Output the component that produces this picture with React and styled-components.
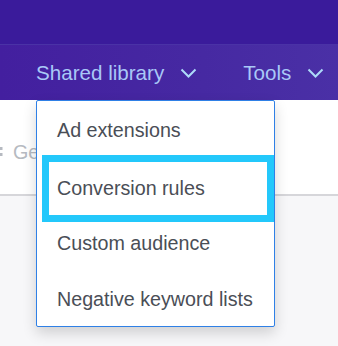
import React from "react";
import styled, { createGlobalStyle } from "styled-components";

const GlobalStyle = createGlobalStyle`
  html, body {
    margin: 0;
    padding: 0;
    background: #f7f7f9;
    font-family: "Liberation Sans", Arial, sans-serif;
    -webkit-font-smoothing: antialiased;
  }
`;

const Page = styled.div`
  position: relative;
  width: 338px;
  height: 346px;
  overflow: hidden;
  background: #f7f7f9;
`;

const TopBar = styled.div`
  height: 44px;
  background: #3a1b9b;
`;

const NavBar = styled.nav`
  display: flex;
  align-items: center;
  height: 55px;
  padding-left: 36px;
  border-top: 1px solid #4a32a6;
  background: linear-gradient(90deg, #431f9f 0%, #4629a2 60%, #4a30a6 100%);
`;

const NavItem = styled.div`
  display: flex;
  align-items: center;
  gap: 16px;
  margin-right: 46px;
  color: #a9c8f7;
  font-size: 20.6px;
  line-height: 24px;
  white-space: nowrap;
`;

const Chevron = () => (
  <svg width="17" height="10" viewBox="0 0 17 10" fill="none">
    <path d="M1.5 1.5 L8.5 8.5 L15.5 1.5" stroke="#addaf9" strokeWidth="2" />
  </svg>
);

const Toolbar = styled.div`
  display: flex;
  align-items: center;
  gap: 10px;
  height: 84px;
  padding-top: 10px;
  background: #fff;
  border-bottom: 2px solid #d6d6da;
  color: #b6bac1;
  font-size: 19.7px;
`;

const Handle = () => (
  <svg width="3" height="12" viewBox="0 0 3 12">
    <rect x="0" y="1" width="2.5" height="3" fill="#b6bac1" />
    <rect x="0" y="7" width="2.5" height="3" fill="#b6bac1" />
  </svg>
);

const Menu = styled.ul`
  position: absolute;
  top: 100px;
  left: 36px;
  width: 237px;
  margin: 0;
  padding: 0;
  list-style: none;
  background: #fff;
  border: 1px solid #2f80e6;
  border-radius: 2px;
  box-shadow: 0 6px 14px rgba(0, 0, 0, 0.16);
`;

const Item = styled.li`
  padding: ${(p) => p.$top}px 20px ${(p) => p.$bottom}px;
  color: #4a4e56;
  font-size: 19.7px;
  line-height: 23px;
  white-space: nowrap;
`;

const ActiveItem = styled.li`
  display: flex;
  align-items: center;
  height: 53px;
  margin-left: 5px;
  padding: 0 8px;
  border: 7px solid #23c8fb;
  color: #4a4e56;
  font-size: 19.7px;
  line-height: 23px;
  white-space: nowrap;
`;

export default function App() {
  return (
    <Page>
      <GlobalStyle />
      <TopBar />
      <NavBar>
        <NavItem>
          Shared library <Chevron />
        </NavItem>
        <NavItem>
          Tools <Chevron />
        </NavItem>
      </NavBar>
      <Toolbar>
        <Handle />
        <span>Get</span>
      </Toolbar>
      <Menu>
        <Item $top={18} $bottom={13}>Ad extensions</Item>
        <ActiveItem>Conversion rules</ActiveItem>
        <Item $top={10} $bottom={23}>Custom audience</Item>
        <Item $top={10} $bottom={15}>Negative keyword lists</Item>
      </Menu>
    </Page>
  );
}
